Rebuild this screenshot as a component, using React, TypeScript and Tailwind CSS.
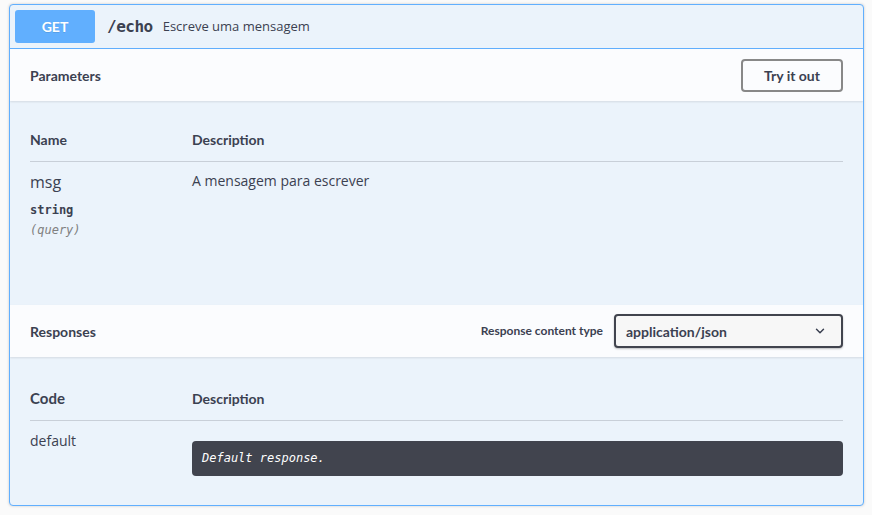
import React from "react";
import {ChevronDown} from "lucide-react";

const SectionHeader: React.FC<{title: string; children?: React.ReactNode}> = ({title, children}) => (
    <div className="flex h-[52px] items-center justify-between bg-[#fbfcfe] px-5 shadow-[0_1px_2px_rgba(0,0,0,0.1)]">
        <h4 className="font-['Lato','Open_Sans',sans-serif] text-[14px] font-bold text-[#3b4151]">{title}</h4>
        {children}
    </div>
);

export default function App() {
    return (
        <div className="min-h-[515px] w-[872px] bg-[#fafafa] pt-1 text-[#3b4151]">
            <div className="ml-[9px] w-[855px] overflow-hidden rounded-[4px] border border-[#61affe] bg-[#ebf3fb] shadow-[0_0_3px_rgba(0,0,0,0.19)]">
                {/* summary */}
                <div className="flex h-[44px] items-center border-b border-[#61affe] px-[5px]">
                    <span
                        className="flex h-[33px] w-[80px] items-center justify-center rounded-[3px] bg-[#61affe] font-['Lato',sans-serif] text-[14px] font-bold text-white [text-shadow:0_1px_0_rgba(0,0,0,0.1)]">GET</span>
                    <span className="ml-3 font-['DejaVu_Sans_Mono','Liberation_Mono',monospace] text-[16px] font-semibold tracking-[-0.5px]">/echo</span>
                    <span className="ml-[10px] font-['Open_Sans',sans-serif] text-[13px]">Escreve uma mensagem</span>
                </div>

                {/* parameters */}
                <SectionHeader title="Parameters">
                    <button
                        className="h-[33px] w-[102px] rounded-[4px] border-2 border-[#888888] font-['Lato',sans-serif] text-[14px] font-bold text-[#3b4151]">
                        Try it out
                    </button>
                </SectionHeader>
                <div className="h-[204px] px-5 pt-[28px]">
                    <div className="grid grid-cols-[162px_1fr] border-b border-[#3b4151]/20 pb-[11px] font-['Lato',sans-serif] text-[14px] font-bold">
                        <span>Name</span>
                        <span>Description</span>
                    </div>
                    <div className="grid grid-cols-[162px_1fr] items-start pt-[9px] font-['Open_Sans',sans-serif]">
                        <div className="flex flex-col">
                            <span className="text-[16px] leading-[22px]">msg</span>
                            <span className="mt-[9px] font-['DejaVu_Sans_Mono',monospace] text-[12px] font-bold leading-[16px]">string</span>
                            <span className="mt-[4px] font-['DejaVu_Sans_Mono',monospace] text-[12px] italic leading-[16px] text-[#808080]">(query)</span>
                        </div>
                        <span className="text-[14px] leading-[20px]">A mensagem para escrever</span>
                    </div>
                </div>

                {/* responses */}
                <SectionHeader title="Responses">
                    <div className="flex items-center gap-[11px]">
                        <span className="font-['Lato',sans-serif] text-[12px] font-bold">Response content type</span>
                        <div
                            className="flex h-[34px] w-[229px] items-center justify-between rounded-[4px] border-2 border-[#41444e] bg-[#f7f7f7] pl-[10px] pr-[14px] shadow-[0_1px_2px_rgba(0,0,0,0.25)]">
                            <span className="font-['Lato',sans-serif] text-[14px] font-bold">application/json</span>
                            <ChevronDown size={14} strokeWidth={2.5}/>
                        </div>
                    </div>
                </SectionHeader>
                <div className="h-[148px] px-5 pt-[30px]">
                    <div className="grid grid-cols-[162px_1fr] items-center border-b border-[#3b4151]/20 pb-[10px] font-['Lato',sans-serif] font-bold">
                        <span className="text-[15px]">Code</span>
                        <span className="text-[14px]">Description</span>
                    </div>
                    <div className="grid grid-cols-[162px_1fr] items-start pt-[10px]">
                        <span className="font-['Open_Sans',sans-serif] text-[14px] leading-[20px]">default</span>
                        <div className="mt-[10px] flex h-[35px] items-center rounded-[4px] bg-[#41444e] px-[10px]">
                            <span className="font-['DejaVu_Sans_Mono',monospace] text-[12px] italic text-white">Default response.</span>
                        </div>
                    </div>
                </div>
            </div>
        </div>
    );
}
